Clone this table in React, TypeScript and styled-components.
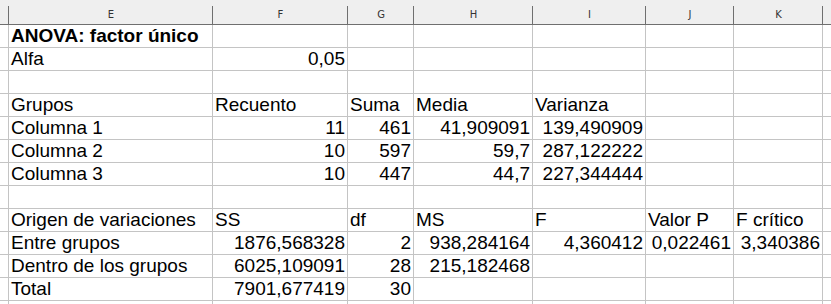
import React from "react";
import styled, { createGlobalStyle } from "styled-components";

const Global = createGlobalStyle`
  html, body { margin: 0; padding: 0; background: #ffffff; overflow: hidden; }
  body { width: 831px; height: 304px; }
`;

const COLS = ["", "E", "F", "G", "H", "I", "J", "K", ""];
const WIDTHS = "9px 204px 135px 66px 119px 113px 88px 89px 1fr";

const Sheet = styled.div`
  display: grid;
  grid-template-columns: ${WIDTHS};
  grid-auto-rows: min-content;
  width: 831px;
  height: 304px;
  overflow: hidden;
  font-family: "Liberation Sans", Arial, sans-serif;
  color: #000;
`;

const HeadCell = styled.div<{ $sep: boolean }>`
  box-sizing: border-box;
  height: 25px;
  background-color: #efefef;
  border-bottom: 1px solid #6f6f6f;
  background-image: ${(p) => (p.$sep ? "linear-gradient(#6f6f6f, #6f6f6f)" : "none")};
  background-size: 1px 18px;
  background-position: right bottom;
  background-repeat: no-repeat;
  font-family: "DejaVu Sans", sans-serif;
  font-size: 10px;
  color: #333;
  text-align: center;
  padding-top: 9px;
  line-height: 12px;
`;

const Cell = styled.div<{ $align: "left" | "right"; $bold?: boolean; $edge?: boolean }>`
  box-sizing: border-box;
  height: 23px;
  border-bottom: 1px solid #c4c4c4;
  border-right: ${(p) => (p.$edge ? "none" : "1px solid #c4c4c4")};
  font-size: 19px;
  line-height: 22px;
  font-weight: ${(p) => (p.$bold ? 700 : 400)};
  text-align: ${(p) => p.$align};
  padding: 0 2px 0 2px;
  white-space: nowrap;
  overflow: visible;
`;

type C = string | { t: string; r?: boolean; b?: boolean };

const rows: C[][] = [
  [{ t: "ANOVA: factor único", b: true }],
  ["Alfa", { t: "0,05", r: true }],
  [],
  ["Grupos", "Recuento", "Suma", "Media", "Varianza"],
  ["Columna 1", { t: "11", r: true }, { t: "461", r: true }, { t: "41,909091", r: true }, { t: "139,490909", r: true }],
  ["Columna 2", { t: "10", r: true }, { t: "597", r: true }, { t: "59,7", r: true }, { t: "287,122222", r: true }],
  ["Columna 3", { t: "10", r: true }, { t: "447", r: true }, { t: "44,7", r: true }, { t: "227,344444", r: true }],
  [],
  ["Origen de variaciones", "SS", "df", "MS", "F", "Valor P", "F crítico"],
  [
    "Entre grupos",
    { t: "1876,568328", r: true },
    { t: "2", r: true },
    { t: "938,284164", r: true },
    { t: "4,360412", r: true },
    { t: "0,022461", r: true },
    { t: "3,340386", r: true },
  ],
  ["Dentro de los grupos", { t: "6025,109091", r: true }, { t: "28", r: true }, { t: "215,182468", r: true }],
  ["Total", { t: "7901,677419", r: true }, { t: "30", r: true }],
  [],
];

export default function App() {
  return (
    <>
      <Global />
      <Sheet>
        {COLS.map((c, i) => (
          <HeadCell key={"h" + i} $sep={i < COLS.length - 1}>
            {c}
          </HeadCell>
        ))}
        {rows.map((row, ri) =>
          COLS.map((_, ci) => {
            if (ci === 0 || ci === COLS.length - 1) {
              return <Cell key={ri + "-" + ci} $align="left" $edge={ci === COLS.length - 1} />;
            }
            const v = row[ci - 1];
            const t = v === undefined ? "" : typeof v === "string" ? v : v.t;
            const r = typeof v === "object" && !!v.r;
            const b = typeof v === "object" && !!v.b;
            return (
              <Cell key={ri + "-" + ci} $align={r ? "right" : "left"} $bold={b}>
                {t}
              </Cell>
            );
          })
        )}
      </Sheet>
    </>
  );
}
